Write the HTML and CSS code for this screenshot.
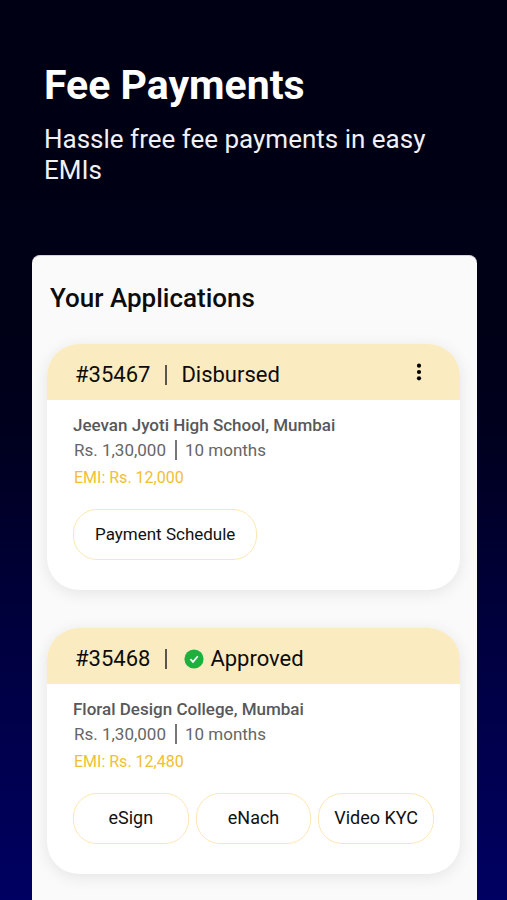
FILE: index.html
```html
<!DOCTYPE html>
<html lang="en">
<head>
  <meta charset="utf-8">
  <meta name="viewport" content="width=device-width, initial-scale=1">
  <title>Fee Payments</title>
  <link rel="stylesheet" href="styles.css">
</head>
<body>
  <header class="intro">
    <h1 class="intro-title">Fee Payments</h1>
    <p class="intro-text">Hassle free fee payments in easy EMIs</p>
  </header>
  <main class="panel">
    <h2 class="panel-title">Your Applications</h2>

    <article class="card">
      <header class="card-header">
        <span class="card-id">#35467</span>
        <span class="divider"></span>
        <span class="card-status">Disbursed</span>
        <button class="menu" type="button" aria-label="More options">
          <svg width="6" height="18" viewBox="0 0 6 18" aria-hidden="true">
            <circle cx="3" cy="2.7" r="2.1"/><circle cx="3" cy="9" r="2.1"/><circle cx="3" cy="15.3" r="2.1"/>
          </svg>
        </button>
      </header>
      <div class="card-body">
        <h3 class="school">Jeevan Jyoti High School, Mumbai</h3>
        <p class="terms"><span>Rs. 1,30,000</span><span class="terms-divider"></span><span>10 months</span></p>
        <p class="emi">EMI: Rs. 12,000</p>
        <div class="actions">
          <button class="pill pill-wide" type="button">Payment Schedule</button>
        </div>
      </div>
    </article>

    <article class="card">
      <header class="card-header">
        <span class="card-id">#35468</span>
        <span class="divider"></span>
        <span class="card-status card-status-icon">
          <svg width="20" height="20" viewBox="0 0 20 20" aria-hidden="true">
            <circle cx="10" cy="10" r="9.6" fill="#1cb13c"/>
            <path d="M6.4 10.2l2.6 2.7 4.8-5.6" fill="none" stroke="#fff" stroke-width="1.7"/>
          </svg>
          Approved
        </span>
      </header>
      <div class="card-body">
        <h3 class="school">Floral Design College, Mumbai</h3>
        <p class="terms"><span>Rs. 1,30,000</span><span class="terms-divider"></span><span>10 months</span></p>
        <p class="emi">EMI: Rs. 12,480</p>
        <div class="actions">
          <button class="pill" type="button">eSign</button>
          <button class="pill" type="button">eNach</button>
          <button class="pill" type="button">Video KYC</button>
        </div>
      </div>
    </article>
  </main>
</body>
</html>
```

FILE: styles.css
```css
* {
  box-sizing: border-box;
}

body {
  display: flex;
  flex-direction: column;
  min-height: 100vh;
  margin: 0;
  background: linear-gradient(#000014 0%, #000016 35%, #00001e 48%, #00003e 70%, #000062 100%);
  color: #0c0c0c;
  font-family: Roboto, "Liberation Sans", sans-serif;
}

h1, h2, h3, p {
  margin: 0;
}

.intro {
  padding: 61px 44px 69px;
  color: #fff;
}

.intro-title {
  margin-bottom: 15px;
  font-size: 41px;
  font-weight: 700;
  line-height: 48px;
}

.intro-text {
  color: #f0f0f6;
  font-size: 26px;
  line-height: 31px;
}

.panel {
  display: flex;
  flex: 1;
  flex-direction: column;
  gap: 38px;
  margin: 0 30px 0 32px;
  padding: 27px 17px 26px 15px;
  border-top: 1px solid #d9d2dc;
  border-radius: 8px 8px 0 0;
  background: #fafafa;
}

.panel-title {
  margin-bottom: -8px;
  padding-left: 3px;
  font-size: 26px;
  font-weight: 500;
  line-height: 31px;
}

.card {
  overflow: hidden;
  border-radius: 32px;
  background: #fff;
  box-shadow: 0 3px 16px rgba(0, 0, 0, 0.09);
}

.card-header {
  display: flex;
  align-items: center;
  height: 56px;
  padding: 6px 26px 0 28px;
  background: #fbebc1;
  font-size: 22px;
  line-height: 28px;
}

.divider {
  width: 2px;
  height: 20px;
  margin: 0 14px 0 15px;
  background: #5b554b;
}

.card-status-icon {
  display: flex;
  align-items: center;
  gap: 6px;
  margin-left: 3px;
}

.menu {
  display: flex;
  align-items: center;
  align-self: flex-start;
  justify-content: center;
  width: 30px;
  height: 44px;
  margin-left: auto;
  padding: 0;
  border: 0;
  background: none;
}

.card-body {
  padding: 12px 26px 30px;
}

.school {
  color: #58585a;
  font-size: 17px;
  font-weight: 500;
  line-height: 26px;
}

.terms {
  display: flex;
  align-items: center;
  padding-left: 1px;
  color: #666;
  font-size: 17px;
  line-height: 24px;
}

.terms-divider {
  width: 2px;
  height: 20px;
  margin: 0 8px 0 9px;
  background: #777;
}

.emi {
  padding: 4px 0 0 1px;
  color: #f0c032;
  font-size: 16px;
  line-height: 24px;
}

.actions {
  display: flex;
  gap: 7px;
  margin-top: 19px;
}

.pill {
  flex: 1;
  height: 51px;
  padding: 0 0 2px;
  border: 1px solid #fce7b4;
  border-radius: 24px;
  background: #fff;
  color: #111;
  font-family: inherit;
  font-size: 18px;
  line-height: 24px;
}

.pill-wide {
  flex: none;
  padding: 0 21px 2px;
  font-size: 17px;
}
```
